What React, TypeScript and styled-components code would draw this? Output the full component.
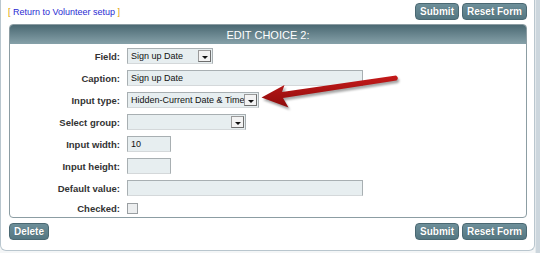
import React from "react";
import styled, { createGlobalStyle } from "styled-components";

const GlobalStyle = createGlobalStyle`
  html, body {
    margin: 0;
    padding: 0;
    background: #ffffff;
  }
  body {
    font-family: "Liberation Sans", Arial, sans-serif;
  }
`;

const Page = styled.div`
  position: relative;
  display: flex;
  width: 540px;
  height: 253px;
  overflow: hidden;
  background: #f4f6f7;
`;

const Card = styled.div`
  box-sizing: border-box;
  width: 535px;
  height: 251px;
  display: flex;
  flex-direction: column;
  padding: 3px 7px 0 8px;
  background: #ffffff;
  border: 1px solid #b9c6ce;
  border-top: none;
  border-radius: 0 0 6px 6px;
`;

const SideStrip = styled.div`
  flex: 1;
  background: #ccd6dd;
  border-left: 1px solid #e4e9ec;
`;

const Bar = styled.div<{ $gap?: number }>`
  display: flex;
  align-items: center;
  justify-content: space-between;
  height: 17px;
  margin-top: ${(p) => p.$gap ?? 0}px;
`;

const BackLink = styled.div`
  margin-left: -1px;
  font-size: 9px;
  color: #e0a100;
  white-space: pre;

  a {
    color: #2a2ad2;
    text-decoration: none;
  }
`;

const ButtonGroup = styled.div`
  display: flex;
  gap: 3px;
`;

const Button = styled.button`
  box-sizing: border-box;
  height: 17px;
  padding: 0 4px;
  font-family: "Liberation Sans", Arial, sans-serif;
  font-size: 10px;
  font-weight: bold;
  color: #ffffff;
  background: linear-gradient(#6d8f99, #557782);
  border: 1px solid #4a6872;
  border-radius: 4px;
  text-shadow: 0 0 1px rgba(0, 0, 0, 0.3);
`;

const Panel = styled.div`
  margin: 4px 0 0 0;
  border: 1px solid #8c9da3;
  border-radius: 4px;
  overflow: hidden;
`;

const PanelHeader = styled.div`
  height: 19px;
  line-height: 20px;
  text-align: center;
  font-size: 11px;
  color: #ffffff;
  background: linear-gradient(#4b6973, #86a1a9);
`;

const PanelBody = styled.div`
  display: flex;
  flex-direction: column;
  padding: 1px 0 0 0;
`;

const Row = styled.div<{ $h?: number }>`
  display: grid;
  grid-template-columns: 110px 1fr;
  column-gap: 7px;
  align-items: center;
  height: ${(p) => p.$h ?? 22}px;
`;

const Label = styled.div`
  text-align: right;
  font-size: 9.5px;
  font-weight: bold;
  color: #333333;
`;

const TextBox = styled.div<{ $w: number }>`
  box-sizing: border-box;
  width: ${(p) => p.$w}px;
  height: 16px;
  padding: 0 3px;
  line-height: 15px;
  font-size: 9px;
  color: #111111;
  background: #e7eef0;
  border: 1px solid #a8afb2;
  border-bottom-color: #d4d8da;
`;

const SelectBox = styled.div<{ $w: number }>`
  position: relative;
  box-sizing: border-box;
  width: ${(p) => p.$w}px;
  height: 16px;
  padding: 0 3px;
  line-height: 15px;
  font-size: 9px;
  color: #111111;
  white-space: nowrap;
  overflow: hidden;
  background: #e7eef0;
  border: 1px solid #a8afb2;
  border-bottom-color: #d4d8da;
`;

const DropButton = styled.span`
  position: absolute;
  right: 1px;
  top: 1px;
  box-sizing: border-box;
  width: 13px;
  height: 12px;
  background: #f3f3f3;
  border: 1px solid #6e6e6e;
  border-top-color: #9a9a9a;
  border-left-color: #9a9a9a;

  &::after {
    content: "";
    position: absolute;
    left: 3px;
    top: 5px;
    border-left: 3px solid transparent;
    border-right: 3px solid transparent;
    border-top: 3px solid #111111;
  }
`;

const CheckBox = styled.div`
  box-sizing: border-box;
  width: 11px;
  height: 11px;
  margin-top: 1px;
  background: #eceeef;
  border: 1px solid #9a9fa2;
`;

const ArrowNote = styled.svg`
  position: absolute;
  left: 0;
  top: 0;
  pointer-events: none;
`;

function Select({ width, value }: { width: number; value: string }) {
  return (
    <SelectBox $w={width}>
      {value}
      <DropButton />
    </SelectBox>
  );
}

const arrowShape =
  "M261.5,97.5 L284.5,85 L282,92 L396,75.6 Q399.5,78 396.5,80.6 L283,98 L288.5,107.5 Z";

export default function App() {
  return (
    <Page>
      <GlobalStyle />
      <Card>
        <Bar>
          <BackLink>
            [ <a href="#">Return to Volunteer setup</a> ]
          </BackLink>
          <ButtonGroup>
            <Button>Submit</Button>
            <Button>Reset Form</Button>
          </ButtonGroup>
        </Bar>
        <Panel>
          <PanelHeader>EDIT CHOICE 2:</PanelHeader>
          <PanelBody>
            <Row>
              <Label>Field:</Label>
              <Select width={86} value="Sign up Date" />
            </Row>
            <Row>
              <Label>Caption:</Label>
              <TextBox $w={236}>Sign up Date</TextBox>
            </Row>
            <Row>
              <Label>Input type:</Label>
              <Select width={132} value="Hidden-Current Date & Time" />
            </Row>
            <Row>
              <Label>Select group:</Label>
              <Select width={119} value="" />
            </Row>
            <Row>
              <Label>Input width:</Label>
              <TextBox $w={44}>10</TextBox>
            </Row>
            <Row>
              <Label>Input height:</Label>
              <TextBox $w={44} />
            </Row>
            <Row>
              <Label>Default value:</Label>
              <TextBox $w={236} />
            </Row>
            <Row $h={18}>
              <Label>Checked:</Label>
              <CheckBox />
            </Row>
          </PanelBody>
        </Panel>
        <Bar $gap={5}>
          <Button>Delete</Button>
          <ButtonGroup>
            <Button>Submit</Button>
            <Button>Reset Form</Button>
          </ButtonGroup>
        </Bar>
      </Card>
      <SideStrip />
      <ArrowNote width="540" height="253" viewBox="0 0 540 253">
        <defs>
          <linearGradient id="arrowFill" x1="0" y1="0" x2="0" y2="1">
            <stop offset="0" stopColor="#c41a1a" />
            <stop offset="1" stopColor="#8e0c0c" />
          </linearGradient>
          <filter id="arrowShadow" x="-10%" y="-50%" width="120%" height="200%">
            <feGaussianBlur stdDeviation="1.2" />
          </filter>
        </defs>
        <path
          d={arrowShape}
          fill="rgba(0,0,0,0.35)"
          transform="translate(1.5,2.5)"
          filter="url(#arrowShadow)"
        />
        <path d={arrowShape} fill="url(#arrowFill)" />
      </ArrowNote>
    </Page>
  );
}
